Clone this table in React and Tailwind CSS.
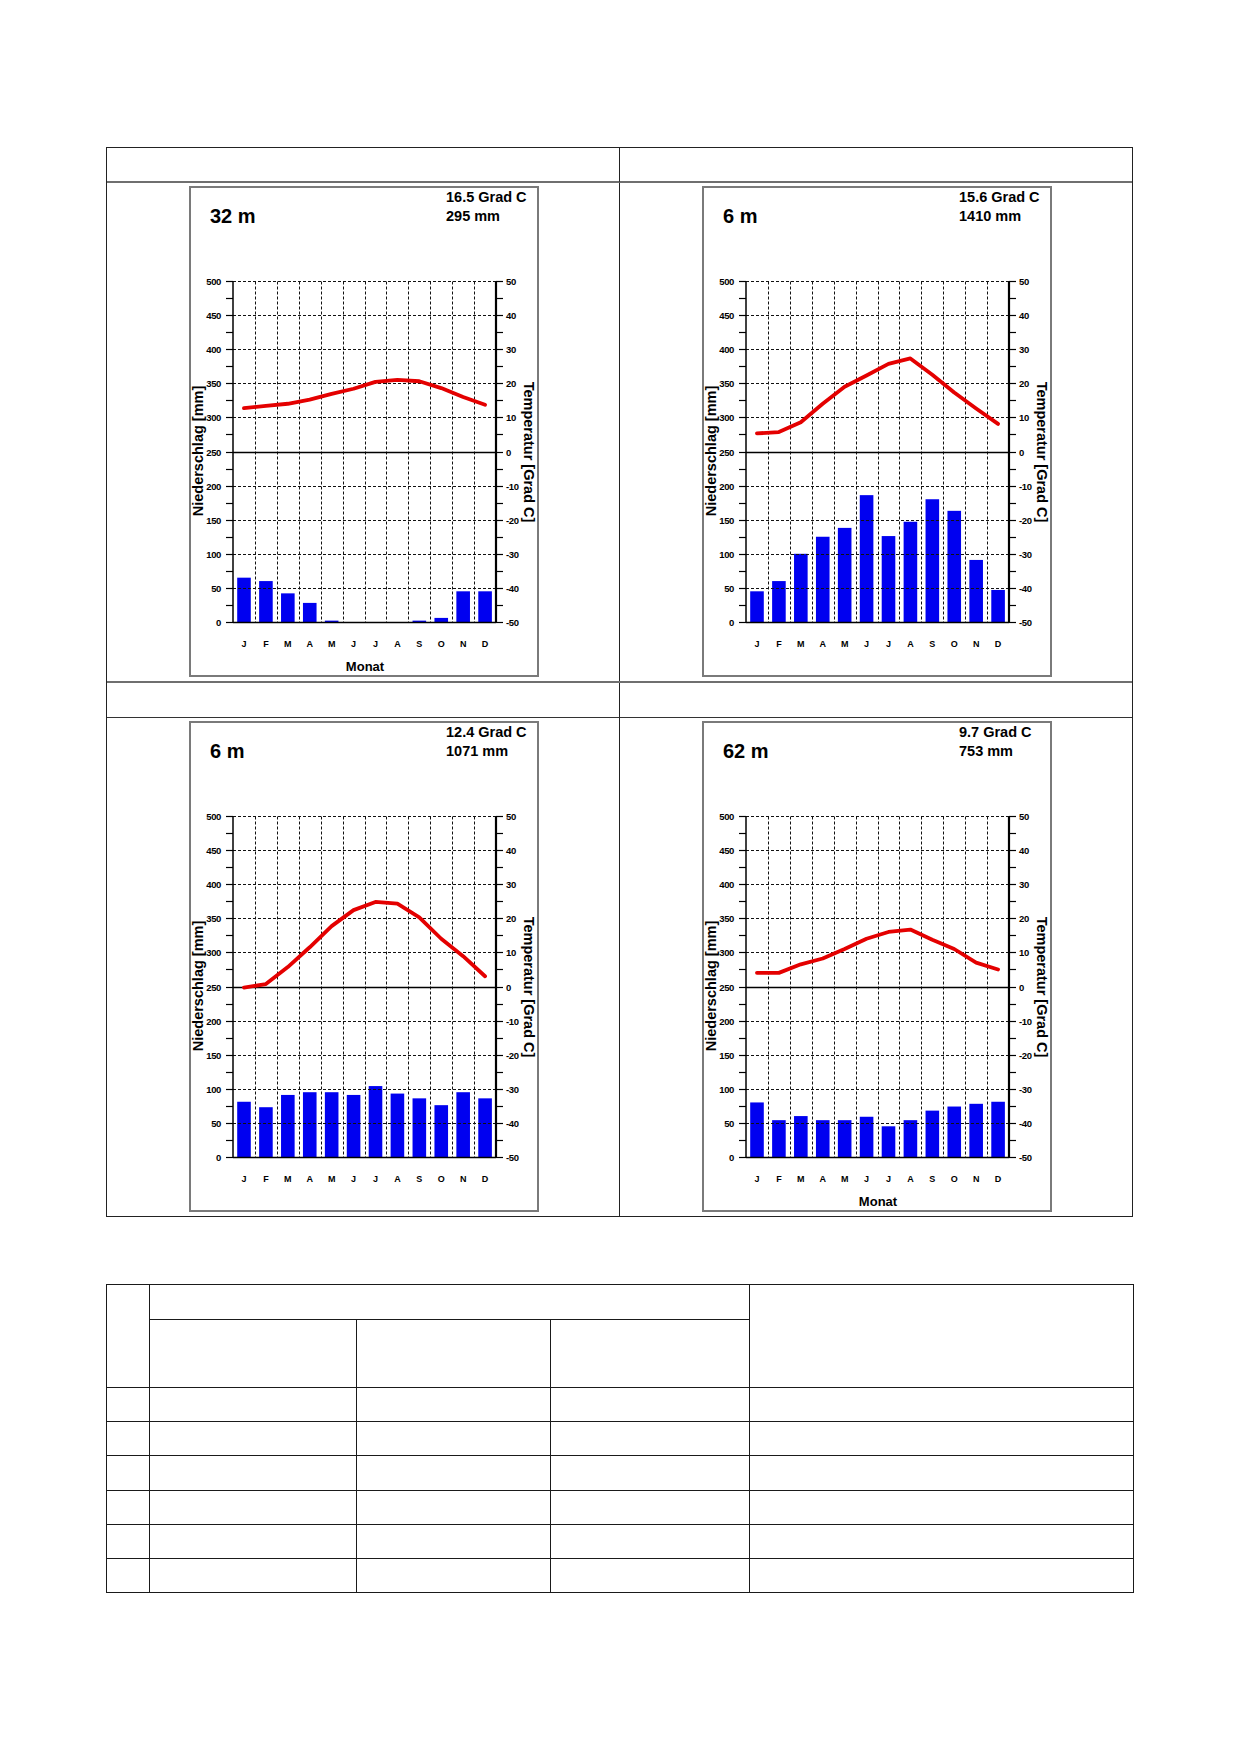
import React from 'react';

const MONTHS = ['J', 'F', 'M', 'A', 'M', 'J', 'J', 'A', 'S', 'O', 'N', 'D'];

const charts = [
  { elev: '32 m', temp: '16.5 Grad C', prec: '295 mm', monat: true,
    p: [65, 60, 42, 28, 2, 0, 0, 0, 2, 6, 45, 45],
    t: [12.7, 13.4, 14, 15.2, 16.9, 18.4, 20.4, 21, 20.6, 18.6, 16, 13.7] },
  { elev: '6 m', temp: '15.6 Grad C', prec: '1410 mm', monat: false,
    p: [45, 60, 100, 125, 138, 186, 126, 147, 180, 163, 91, 47],
    t: [5.3, 5.7, 8.6, 14, 19, 22.3, 25.7, 27.3, 22.5, 17.3, 12.6, 8.1] },
  { elev: '6 m', temp: '12.4 Grad C', prec: '1071 mm', monat: false,
    p: [81, 73, 91, 95, 95, 91, 104, 93, 86, 76, 95, 86],
    t: [-0.3, 0.7, 5.7, 11.5, 17.7, 22.4, 24.8, 24.3, 20.3, 14, 8.9, 3] },
  { elev: '62 m', temp: '9.7 Grad C', prec: '753 mm', monat: true,
    p: [80, 54, 60, 54, 54, 59, 45, 54, 68, 74, 78, 81],
    t: [4, 4, 6.5, 8.2, 11, 14, 16, 16.7, 13.7, 11, 7, 5] },
];

// plot geometry inside the 350x491 chart box
const X0 = 44;
const X1 = 307;
const YB = 436;
const K = 0.682; // px per mm
const MW = (X1 - X0) / 12;
const FONT = '"Liberation Sans", Arial, sans-serif';

const yMm = (v) => Math.round(YB - v * K) + 0.5;
// 10 Grad C entsprechen 50 mm
const yT = (t) => YB - (t + 50) * 5 * K;

function Klimadiagramm({ d }) {
  const mmSteps = Array.from({ length: 11 }, (_, i) => i * 50);
  const minor = Array.from({ length: 21 }, (_, i) => i * 25);
  const tempPts = d.t.map((t, i) => `${X0 + MW * (i + 0.5)},${yT(t)}`).join(' ');

  return (
    <div className="w-[350px] h-[491px] border-2 border-[#7a7a7a] bg-white overflow-hidden">
      <svg width="346" height="487" viewBox="2 2 346 487" fontFamily={FONT}>
        {/* Kopf */}
        <text x="21" y="37" fontSize="20" fontWeight="bold" fill="#000">{d.elev}</text>
        <text x="257" y="16" fontSize="14.5" fontWeight="bold" fill="#000">{d.temp}</text>
        <text x="257" y="35" fontSize="14.5" fontWeight="bold" fill="#000">{d.prec}</text>

        {/* Niederschlag Balken */}
        {d.p.map((v, i) => (
          <rect key={i} x={X0 + MW * i + 4.2} y={YB - v * K} width="13.6" height={v * K} fill="#0000f0" />
        ))}

        {/* Gitter */}
        {mmSteps.slice(1).map((v) =>
          v === 250 ? null : (
            <line key={v} x1={X0} x2={X1} y1={yMm(v)} y2={yMm(v)} stroke="#111" strokeWidth="1" strokeDasharray="3 2" />
          )
        )}
        {Array.from({ length: 11 }, (_, i) => {
          const x = Math.round(X0 + MW * (i + 1)) + 0.5;
          return <line key={i} x1={x} x2={x} y1={yMm(500)} y2={YB} stroke="#111" strokeWidth="1" strokeDasharray="3 2" />;
        })}
        <line x1={X0} x2={X1} y1={yMm(250)} y2={yMm(250)} stroke="#000" strokeWidth="1.3" />

        {/* Achsen */}
        <line x1={X0} x2={X0} y1={yMm(500)} y2={YB + 0.5} stroke="#000" strokeWidth="1.5" />
        <line x1={X1} x2={X1} y1={yMm(500)} y2={YB + 0.5} stroke="#000" strokeWidth="2.2" />
        <line x1={X0} x2={X1} y1={YB + 0.5} y2={YB + 0.5} stroke="#000" strokeWidth="1.6" />
        {minor.map((v) => (
          <g key={v}>
            <line x1={X0 - 7} x2={X0} y1={yMm(v)} y2={yMm(v)} stroke="#000" strokeWidth="1.2" />
            <line x1={X1} x2={X1 + 7} y1={yMm(v)} y2={yMm(v)} stroke="#000" strokeWidth="1.2" />
          </g>
        ))}

        {/* Achsenbeschriftung */}
        {mmSteps.map((v) => (
          <text key={v} x="32" y={yMm(v) + 3.5} fontSize="9.5" fontWeight="bold" textAnchor="end" fill="#000" letterSpacing="-0.4">
            {v}
          </text>
        ))}
        {mmSteps.map((v) => (
          <text key={v} x="317" y={yMm(v) + 3.5} fontSize="9.5" fontWeight="bold" fill="#000" letterSpacing="-0.4">
            {v / 5 - 50}
          </text>
        ))}
        {MONTHS.map((m, i) => (
          <text key={i} x={X0 + MW * (i + 0.5)} y="461" fontSize="9" fontWeight="bold" textAnchor="middle" fill="#000">
            {m}
          </text>
        ))}

        <text
          x="0" y="0" fontSize="14.5" fontWeight="bold" textAnchor="middle" fill="#000"
          transform="translate(14 265) rotate(-90)"
        >
          Niederschlag [mm]
        </text>
        <text
          x="0" y="0" fontSize="14.5" fontWeight="bold" textAnchor="middle" fill="#000"
          transform="translate(335 266) rotate(90)"
        >
          Temperatur [Grad C]
        </text>
        {d.monat && (
          <text x="176" y="485" fontSize="13" fontWeight="bold" textAnchor="middle" fill="#000">Monat</text>
        )}

        {/* Temperaturkurve */}
        <polyline points={tempPts} fill="none" stroke="#e40000" strokeWidth="3.8" strokeLinejoin="round" strokeLinecap="round" />
      </svg>
    </div>
  );
}

function ChartCell({ d, right }) {
  return (
    <div className={`h-[498px] pl-[82px] pt-[3px] ${right ? '' : 'border-r border-[#222]'}`}>
      <Klimadiagramm d={d} />
    </div>
  );
}

function HeadCell({ right, bottom }) {
  return <div className={`h-[35px] ${bottom} ${right ? '' : 'border-r border-[#222]'}`} />;
}

export default function App() {
  const rows = [0, 1, 2, 3, 4, 5];
  const td = 'border border-[#1a1a1a] p-0';

  return (
    <div className="min-h-[1752px] w-[1239px] bg-white pt-[147px] pl-[106px]">
      {/* Klimadiagramme */}
      <div className="w-[1027px] border border-[#222] grid grid-cols-2">
        <HeadCell bottom="border-b-2 border-b-[#6f6f6f]" />
        <HeadCell right bottom="border-b-2 border-b-[#6f6f6f]" />
        <div className="border-b-2 border-[#6f6f6f]">
          <ChartCell d={charts[0]} />
        </div>
        <div className="border-b-2 border-[#6f6f6f]">
          <ChartCell d={charts[1]} right />
        </div>
        <HeadCell bottom="border-b border-b-[#333]" />
        <HeadCell right bottom="border-b border-b-[#333]" />
        <ChartCell d={charts[2]} />
        <ChartCell d={charts[3]} right />
      </div>

      {/* Auswertungstabelle */}
      <table className="mt-[67px] w-[1027px] table-fixed border-collapse">
        <colgroup>
          <col className="w-[43px]" />
          <col className="w-[207px]" />
          <col className="w-[194px]" />
          <col className="w-[199px]" />
          <col className="w-[384px]" />
        </colgroup>
        <tbody>
          <tr className="h-[35px]">
            <td rowSpan={2} className={td} />
            <td colSpan={3} className={td} />
            <td rowSpan={2} className={td} />
          </tr>
          <tr className="h-[68px]">
            <td className={td} />
            <td className={td} />
            <td className={td} />
          </tr>
          {rows.map((r) => (
            <tr key={r} className="h-[34.2px]">
              <td className={td} />
              <td className={td} />
              <td className={td} />
              <td className={td} />
              <td className={td} />
            </tr>
          ))}
        </tbody>
      </table>
    </div>
  );
}
